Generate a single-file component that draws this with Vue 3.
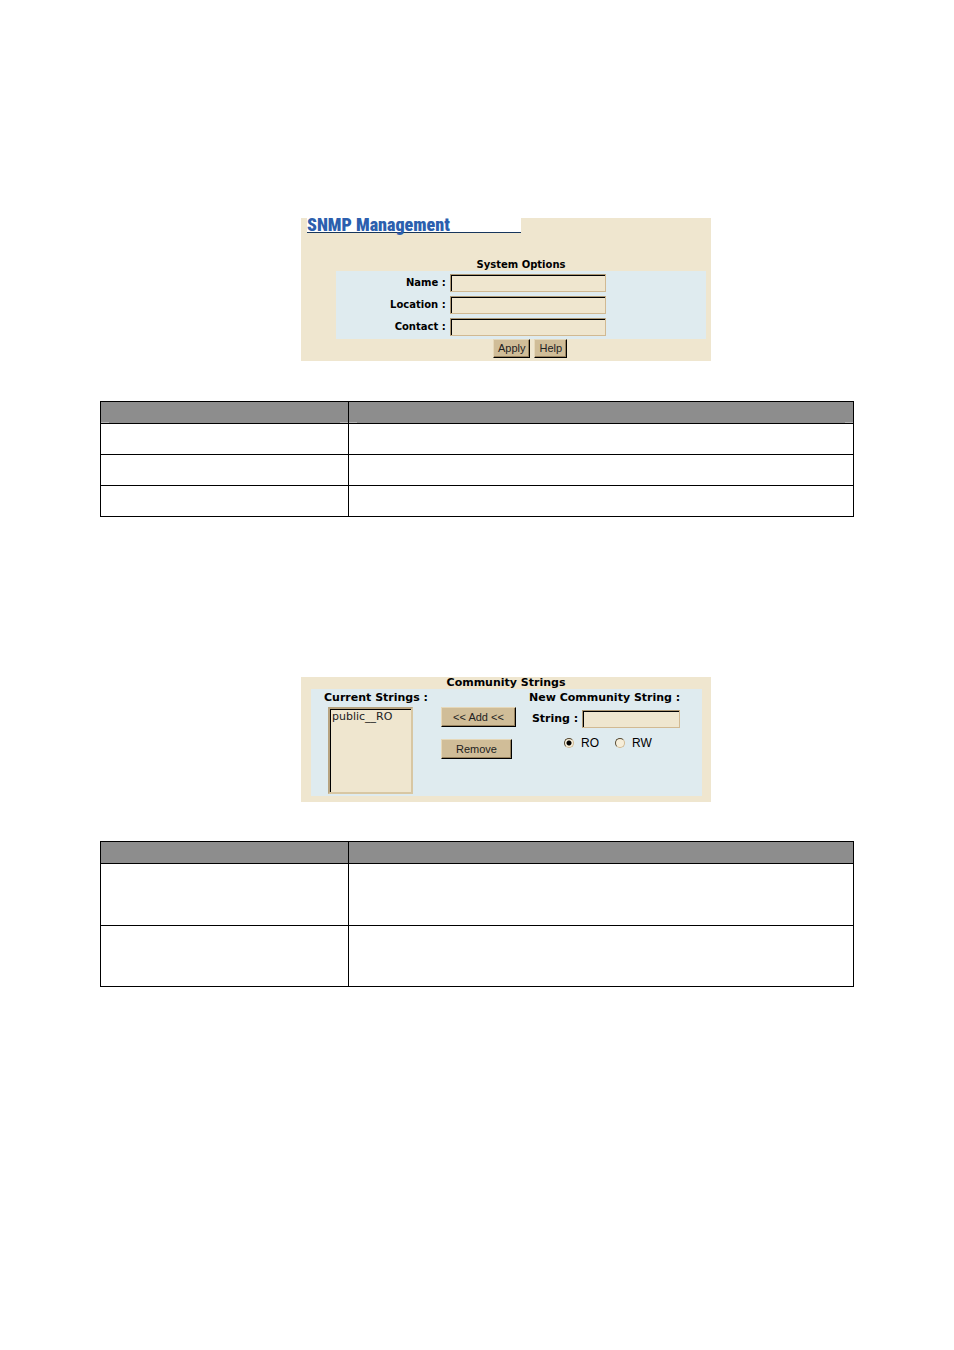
<script setup>
import { ref } from 'vue'

const system = ref([
  { id: 'name', label: 'Name :', value: '' },
  { id: 'location', label: 'Location :', value: '' },
  { id: 'contact', label: 'Contact :', value: '' },
])
const strings = ref(['public__RO'])
const newString = ref('')
const access = ref('RO')
</script>

<template>
  <main class="page">
    <section class="figure">
      <form class="panel system" @submit.prevent>
        <h1 class="banner">SNMP Management</h1>
        <h2 class="heading">System Options</h2>
        <div class="fields">
          <div v-for="f in system" :key="f.id" class="field">
            <label :for="f.id">{{ f.label }}</label>
            <input :id="f.id" v-model="f.value" class="box" type="text">
          </div>
        </div>
        <div class="actions">
          <button class="btn" type="submit">Apply</button>
          <button class="btn" type="button">Help</button>
        </div>
      </form>
    </section>

    <table class="grid marked">
      <thead><tr><th></th><th></th></tr></thead>
      <tbody>
        <tr v-for="n in 3" :key="n"><td></td><td></td></tr>
      </tbody>
    </table>

    <section class="figure second">
      <form class="panel community" @submit.prevent>
        <h2 class="heading">Community Strings</h2>
        <div class="strings">
          <div class="current">
            <label for="current">Current Strings :</label>
            <select id="current" class="list" size="5">
              <option v-for="s in strings" :key="s">{{ s }}</option>
            </select>
          </div>
          <div class="moves">
            <button class="btn add" type="submit">&lt;&lt; Add &lt;&lt;</button>
            <button class="btn remove" type="button">Remove</button>
          </div>
          <div class="new">
            <h3 class="sub">New Community String :</h3>
            <div class="entry">
              <label for="string">String :</label>
              <input id="string" v-model="newString" class="box" type="text">
            </div>
            <div class="radios">
              <label><input v-model="access" type="radio" name="access" value="RO">RO</label>
              <label><input v-model="access" type="radio" name="access" value="RW">RW</label>
            </div>
          </div>
        </div>
      </form>
    </section>

    <table class="grid tall">
      <thead><tr><th></th><th></th></tr></thead>
      <tbody>
        <tr v-for="n in 2" :key="n"><td></td><td></td></tr>
      </tbody>
    </table>
  </main>
</template>

<style>
body {
  margin: 0;
  background: #fff;
}
</style>

<style scoped>
.page {
  box-sizing: border-box;
  min-height: 100vh;
  padding: 218px 100px 100px;
  color: #000;
  font: 10px/14px "DejaVu Sans", Verdana, sans-serif;
}

.figure {
  display: grid;
  grid-template-columns: 201fr minmax(410px, 410fr) 143fr;
}

.second {
  margin-top: 160px;
}

.panel {
  box-sizing: border-box;
  grid-column: 2;
  background: #efe6cf;
}

.system {
  padding-bottom: 3px;
}

.community {
  padding-bottom: 6px;
}

.banner {
  width: 214px;
  height: 14px;
  margin: 0 0 0 6px;
  border-bottom: 1px solid #17365c;
  background: #fff;
  color: #2c5fae;
  font: 900 18px/14px Impact, "Roboto Condensed", "Open Sans Condensed", "DejaVu Sans Condensed", sans-serif;
  white-space: nowrap;
}

.heading {
  margin: 0;
  font-size: 10px;
  line-height: 12px;
  text-align: center;
}

.system .heading {
  padding: 26px 0 0 30px;
}

.community .heading {
  font-size: 11px;
}

.fields {
  display: grid;
  gap: 4px;
  margin: 0 5px 0 35px;
  padding: 3px 0;
  background: #dfebef;
}

.field {
  display: grid;
  grid-template-columns: 110fr 157fr 96fr;
  column-gap: 4px;
  align-items: center;
}

.field label {
  font-weight: bold;
  text-align: right;
}

.box {
  box-sizing: border-box;
  width: 100%;
  min-width: 0;
  height: 18px;
  margin: 0;
  padding: 0 2px;
  border: 1px solid;
  border-color: #ab9775 #d1b992 #d1b992 #ab9775;
  border-radius: 0;
  outline: 0;
  background: #efe6cf;
  box-shadow: inset 1px 1px #000;
  font: inherit;
}

.actions {
  display: flex;
  justify-content: center;
  gap: 4px;
  padding-left: 48px;
}

.btn {
  box-sizing: border-box;
  height: 19px;
  margin: 0;
  padding: 0 4px;
  border: 1px solid;
  border-color: #e6d8b9 #000 #000 #e6d8b9;
  border-radius: 0;
  background: #d0bd98;
  box-shadow: inset -1px -1px #98825d;
  color: #222;
  font: 11px/15px "Liberation Sans", Arial, sans-serif;
}

.strings {
  display: grid;
  grid-template-columns: 105fr 75fr 149fr;
  column-gap: 13px;
  margin: 0 9px 0 10px;
  padding: 2px 24px 2px 13px;
  background: #dfebef;
}

.current label,
.sub,
.entry label {
  display: block;
  margin: 0;
  font-size: 11px;
  line-height: 14px;
  font-weight: bold;
  white-space: nowrap;
}

.list {
  box-sizing: border-box;
  display: block;
  width: 85px;
  height: 87px;
  margin: 2px 0 0 4px;
  padding: 0;
  border: 2px solid;
  border-color: #b7a37f #d8c7a3 #d8c7a3 #b7a37f;
  border-radius: 0;
  outline: 0;
  overflow: hidden;
  background: #efe6cf;
  box-shadow: inset 1px 1px #000;
  color: #222;
  font: 11px/14px "DejaVu Sans", Verdana, sans-serif;
}

.list option {
  min-height: 14px;
  padding: 1px 2px 0;
}

.list option,
.list option:checked {
  background: transparent;
  color: #222;
}

.moves {
  display: flex;
  flex-direction: column;
  align-items: flex-start;
  gap: 12px;
  padding-top: 16px;
}

.moves .btn {
  height: 20px;
}

.add {
  width: 75px;
}

.remove {
  width: 71px;
}

.entry {
  display: grid;
  grid-template-columns: auto 98px;
  justify-content: end;
  gap: 4px;
  align-items: center;
  margin-top: 5px;
}

.radios {
  display: flex;
  gap: 16px;
  margin: 8px 0 0 35px;
}

.radios label {
  display: flex;
  align-items: center;
  gap: 7px;
  font: 12px/14px "Liberation Sans", Arial, sans-serif;
}

.radios input {
  appearance: none;
  box-sizing: border-box;
  width: 10px;
  height: 10px;
  margin: 0;
  border: 1px solid;
  border-color: #55472f #d1b992 #d1b992 #55472f;
  border-radius: 50%;
  background: #f6eeda;
}

.radios input:checked {
  background: radial-gradient(circle, #000 2px, #f6eeda 3px);
}

.grid {
  width: 100%;
  margin-top: 40px;
  border-collapse: collapse;
  table-layout: fixed;
}

.grid th,
.grid td {
  box-sizing: border-box;
  height: 31px;
  padding: 0;
  border: 1px solid #000;
}

.grid th {
  width: 33%;
  height: 22px;
  background-color: #8d8d8d;
}

.grid th + th {
  width: 67%;
}

.marked th {
  background-image: linear-gradient(#b3b3b3, #b3b3b3), linear-gradient(#b3b3b3, #b3b3b3);
  background-position: left bottom, right bottom;
  background-repeat: no-repeat;
  background-size: 8px 1px;
}

.second + .grid {
  margin-top: 39px;
}

.tall td {
  height: 61px;
}

.tall tr:first-child td {
  height: 62px;
}
</style>
